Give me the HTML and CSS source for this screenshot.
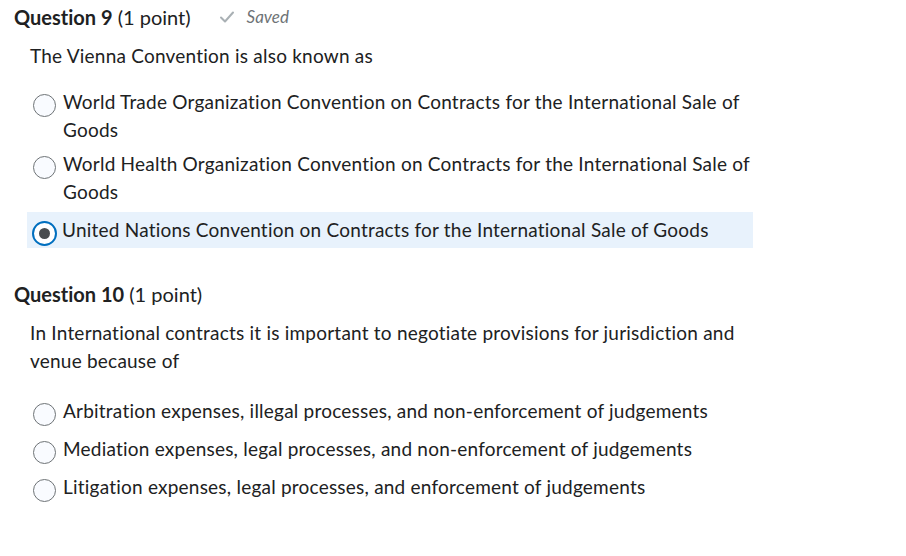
FILE: index.html
```html
<!DOCTYPE html>
<html>
<head>
<meta charset="utf-8">
<link rel="stylesheet" href="styles.css">
</head>
<body>
<div class="question">
  <div class="q-head">
    <span class="q-title"><b>Question 9</b> (1 point)</span>
    <span class="saved">
      <svg class="check" width="16" height="14" viewBox="0 0 16 14"><path d="M2 7.5 L6 11.5 L14 2.5" fill="none" stroke="#a9b0b4" stroke-width="2" stroke-linecap="round" stroke-linejoin="round"/></svg>
      <i>Saved</i>
    </span>
  </div>
  <div class="prompt">The Vienna Convention is also known as</div>
  <div class="options">
    <div class="option"><span class="radio"></span><span class="label">World Trade Organization Convention on Contracts for the International Sale of Goods</span></div>
    <div class="option"><span class="radio"></span><span class="label">World Health Organization Convention on Contracts for the International Sale of Goods</span></div>
    <div class="option selected"><span class="radio checked"></span><span class="label">United Nations Convention on Contracts for the International Sale of Goods</span></div>
  </div>
</div>
<div class="question q2">
  <div class="q-head">
    <span class="q-title"><b>Question 10</b> (1 point)</span>
  </div>
  <div class="prompt">In International contracts it is important to negotiate provisions for jurisdiction and venue because of</div>
  <div class="options opts2">
    <div class="option"><span class="radio"></span><span class="label">Arbitration expenses, illegal processes, and non-enforcement of judgements</span></div>
    <div class="option"><span class="radio"></span><span class="label">Mediation expenses, legal processes, and non-enforcement of judgements</span></div>
    <div class="option"><span class="radio"></span><span class="label">Litigation expenses, legal processes, and enforcement of judgements</span></div>
  </div>
</div>
</body>
</html>
```
FILE: styles.css
```css
html, body {
  margin: 0;
  padding: 0;
  background: #ffffff;
}
body {
  font-family: Lato, "Noto Sans", sans-serif;
  color: #202122;
  font-size: 19px;
  line-height: 28px;
  font-variant-ligatures: none;
  letter-spacing: 0.22px;
  width: 906px;
  height: 556px;
  overflow: hidden;
}
.question {
  padding-left: 14px;
}
.q-head {
  margin-top: 3px;
  height: 28px;
  display: flex;
  align-items: center;
  font-size: 20px;
  letter-spacing: 0;
}
.q-title b {
  font-weight: 700;
}
.saved {
  margin-left: 28px;
  display: flex;
  align-items: center;
  color: #6e7376;
  font-size: 17px;
}
.check {
  margin-right: 12px;
}
.prompt {
  margin: 11px 0 0 16px;
  width: 720px;
}
.options {
  margin: 18px 0 0 13px;
  width: 726px;
}
.option {
  display: flex;
  align-items: flex-start;
  padding: 0 0 0 6px;
  margin-bottom: 6px;
}
.option.selected {
  background: #e8f2fc;
  padding-top: 4px;
}
.radio {
  flex: none;
  box-sizing: border-box;
  width: 23px;
  height: 23px;
  margin: 6px 7px 3px 0;
  border: 1px solid #6e7376;
  border-radius: 50%;
  background: #f9fbff;
  position: relative;
}
.radio.checked {
  width: 25px;
  height: 25px;
  margin: 5px 5px 2px -1px;
  border: 2px solid #006fbf;
  background: #ffffff;
}
.radio.checked::after {
  content: "";
  position: absolute;
  left: 50%;
  top: 50%;
  width: 11px;
  height: 11px;
  margin: -5.5px 0 0 -5.5px;
  border-radius: 50%;
  background: #494c4e;
}
.label {
  flex: 1;
}
.q2 {
  margin-top: 32px;
}
.opts2 {
  margin-top: 22px;
}
```
